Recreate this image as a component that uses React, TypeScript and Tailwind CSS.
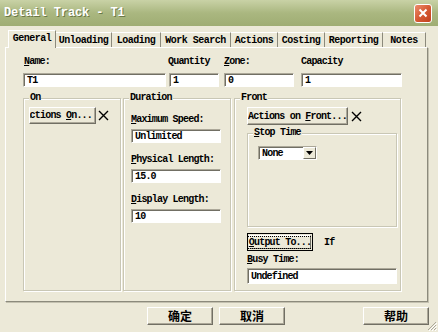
import React from 'react';

const mono = "font-['Liberation_Mono','Noto_Sans_CJK_SC',monospace] text-[10px] tracking-[-0.8px] text-black";

const U: React.FC<{ children: React.ReactNode }> = ({ children }) => (
  <span className="underline underline-offset-[1px]">{children}</span>
);

const Field: React.FC<{ value: string; className?: string }> = ({ value, className = '' }) => (
  <div
    className={`bg-white border border-t-[#aca899] border-l-[#aca899] border-r-white border-b-white shadow-[inset_1px_1px_0_#716f64] pl-[3px] flex items-center whitespace-nowrap overflow-hidden ${className}`}
  >
    {value}
  </div>
);

const Btn: React.FC<{ children: React.ReactNode; className?: string }> = ({ children, className = '' }) => (
  <div
    className={`flex items-center border border-t-white border-l-white border-r-[#716f64] border-b-[#716f64] shadow-[inset_-1px_-1px_0_#aca899] bg-[#ece9d8] whitespace-nowrap overflow-hidden ${className}`}
  >
    {children}
  </div>
);

const Group: React.FC<{ label: React.ReactNode; className?: string; children?: React.ReactNode }> = ({
  label,
  className = '',
  children,
}) => (
  <div className={`relative border border-[#c9c7b5] shadow-[inset_1px_1px_0_#fff,1px_1px_0_#fff] ${className}`}>
    <span className="absolute -top-[7px] left-[5px] bg-[#ece9d8] px-[1px] leading-[12px] whitespace-nowrap">{label}</span>
    {children}
  </div>
);

const XMark = () => (
  <svg width="11" height="11" viewBox="0 0 11 11" className="shrink-0">
    <path d="M1 1 L10 10 M10 1 L1 10" stroke="#000" strokeWidth="1.4" />
  </svg>
);

const tabs = [
  { name: 'General', w: 'w-[48px]' },
  { name: 'Unloading', w: 'w-[56px]' },
  { name: 'Loading', w: 'w-[49px]' },
  { name: 'Work Search', w: 'w-[70px]' },
  { name: 'Actions', w: 'w-[47px]' },
  { name: 'Costing', w: 'w-[47px]' },
  { name: 'Reporting', w: 'w-[58px]' },
  { name: 'Notes', w: 'w-[43px]' },
];

export default function App() {
  return (
    <div className={`relative w-[438px] h-[332px] bg-[#ece9d8] overflow-hidden font-semibold ${mono}`}>
      {/* Title bar */}
      <div className="h-[26px] flex items-center justify-between pl-[4px] pr-[6px] bg-gradient-to-b from-[#c9d2a6] via-[#aab780] to-[#9fad73]">
        <span className="font-['Liberation_Mono',monospace] font-bold text-[12px] tracking-[-0.1px] text-white [text-shadow:1px_1px_0_#6b7847]">
          Detail Track - T1
        </span>
        <div className="w-[18px] h-[19px] rounded-[3px] border border-white bg-gradient-to-br from-[#ec8c6c] via-[#d65a34] to-[#c2401c] flex items-center justify-center">
          <svg width="10" height="10" viewBox="0 0 10 10">
            <path d="M1.5 1.5 L8.5 8.5 M8.5 1.5 L1.5 8.5" stroke="#fff" strokeWidth="2" />
          </svg>
        </div>
      </div>

      {/* Tabs */}
      <div className="relative z-10 ml-[8px] mt-[4px] h-[17px] flex items-start tracking-[-0.5px]">
        {tabs.map((t, i) =>
          i === 0 ? (
            <div
              key={t.name}
              className={`${t.w} h-[18px] bg-[#ece9d8] border-t border-l border-t-white border-l-white border-r border-r-[#8c8a7c] flex items-center justify-center pb-[2px]`}
            >
              {t.name}
            </div>
          ) : (
            <div
              key={t.name}
              className={`${t.w} h-[15px] mt-[2px] border-t border-t-white border-r border-r-[#8c8a7c] flex items-center justify-center`}
            >
              {t.name}
            </div>
          ),
        )}
      </div>

      {/* Panel */}
      <div className="ml-[5px] w-[423px] h-[255px] border border-t-white border-l-white border-r-[#8c8a7c] border-b-[#8c8a7c] shadow-[1px_1px_0_#c4c1b0]">
        {/* Top fields */}
        <div className="flex pl-[17px] pt-[8px]">
          <div className="w-[143px]">
            <div className="h-[12px] leading-[12px] pl-[1px] mb-[5px]">
              <U>N</U>ame:
            </div>
            <Field value="T1" className="h-[14px]" />
          </div>
          <div className="w-[50px] ml-[3px]">
            <div className="h-[12px] leading-[12px] mb-[5px] -ml-[1px] whitespace-nowrap">Quantity</div>
            <Field value="1" className="h-[14px]" />
          </div>
          <div className="w-[70px] ml-[5px]">
            <div className="h-[12px] leading-[12px] mb-[5px]">
              <U>Z</U>one:
            </div>
            <Field value="0" className="h-[14px]" />
          </div>
          <div className="w-[101px] ml-[7px]">
            <div className="h-[12px] leading-[12px] mb-[5px]">Capacity</div>
            <Field value="1" className="h-[14px]" />
          </div>
        </div>

        {/* Groups */}
        <div className="flex pl-[17px] mt-[11px]">
          <Group label="On" className="w-[98px] h-[193px]">
            <div className="flex items-center pl-[5px] pt-[8px]">
              <Btn className="w-[67px] h-[17px] justify-end pr-[3px]">
                <span>
                  Actions <U>O</U>n...
                </span>
              </Btn>
              <span className="ml-[2px]">
                <XMark />
              </span>
            </div>
          </Group>

          <Group label="Duration" className="ml-[2px] w-[108px] h-[193px]">
            <div className="flex flex-col pl-[7px] pt-[15px]">
              <div className="h-[12px] leading-[12px]">
                <U>M</U>aximum Speed:
              </div>
              <Field value="Unlimited" className="w-[90px] h-[14px] mt-[3px]" />
              <div className="h-[12px] leading-[12px] mt-[11px]">
                <U>P</U>hysical Length:
              </div>
              <Field value="15.0" className="w-[90px] h-[14px] mt-[3px]" />
              <div className="h-[12px] leading-[12px] mt-[11px]">
                <U>D</U>isplay Length:
              </div>
              <Field value="10" className="w-[90px] h-[14px] mt-[3px]" />
            </div>
          </Group>

          <Group label="Front" className="ml-[3px] w-[167px] h-[193px]">
            <div className="flex flex-col pl-[12px] pt-[8px]">
              <div className="flex items-center">
                <Btn className="w-[101px] h-[18px] justify-center">
                  <span>
                    Actions on <U>F</U>ront...
                  </span>
                </Btn>
                <span className="ml-[3px]">
                  <XMark />
                </span>
              </div>

              <Group
                label={
                  <>
                    <U>S</U>top Time
                  </>
                }
                className="mt-[8px] w-[150px] h-[94px]"
              >
                <div className="pl-[10px] pt-[12px]">
                  <div className="w-[59px] h-[14px] bg-white border border-t-[#aca899] border-l-[#aca899] border-r-white border-b-white shadow-[inset_1px_1px_0_#716f64] flex items-center justify-between">
                    <span className="pl-[3px]">None</span>
                    <div className="w-[13px] h-full border border-t-white border-l-white border-r-[#716f64] border-b-[#716f64] bg-[#ece9d8] flex items-center justify-center">
                      <svg width="7" height="4" viewBox="0 0 7 4">
                        <path d="M0 0 L7 0 L3.5 4 Z" fill="#000" />
                      </svg>
                    </div>
                  </div>
                </div>
              </Group>

              <div className="flex items-center mt-[6px]">
                <div className="w-[66px] h-[18px] border border-black bg-[#ece9d8] p-[1px]">
                  <div className="w-full h-full border border-t-white border-l-white border-r-[#716f64] border-b-[#716f64] flex items-center justify-center">
                    <span className="outline outline-1 outline-dotted outline-black leading-[11px] px-[1px] whitespace-nowrap">
                      <U>O</U>utput To...
                    </span>
                  </div>
                </div>
                <span className="ml-[11px]">If</span>
              </div>

              <div className="h-[12px] leading-[12px] mt-[3px]">
                <U>B</U>usy Time:
              </div>
              <Field value="Undefined" className="w-[150px] h-[16px] mt-[2px]" />
            </div>
          </Group>
        </div>
      </div>

      {/* Bottom buttons */}
      <div className="flex mt-[5px] font-['Noto_Sans_CJK_SC',sans-serif] text-[12px] font-bold tracking-normal">
        <Btn className="ml-[147px] w-[66px] h-[18px] justify-center">确定</Btn>
        <Btn className="ml-[6px] w-[66px] h-[18px] justify-center">取消</Btn>
        <Btn className="ml-[78px] w-[66px] h-[18px] justify-center">帮助</Btn>
      </div>

      {/* Resize grip */}
      <svg width="10" height="10" viewBox="0 0 10 10" className="absolute right-[1px] bottom-[1px]">
        <path d="M9 1 L1 9 M9 4 L4 9 M9 7 L7 9" stroke="#aca899" strokeWidth="1" />
        <path d="M10 2 L2 10 M10 5 L5 10 M10 8 L8 10" stroke="#fff" strokeWidth="1" />
      </svg>
    </div>
  );
}
